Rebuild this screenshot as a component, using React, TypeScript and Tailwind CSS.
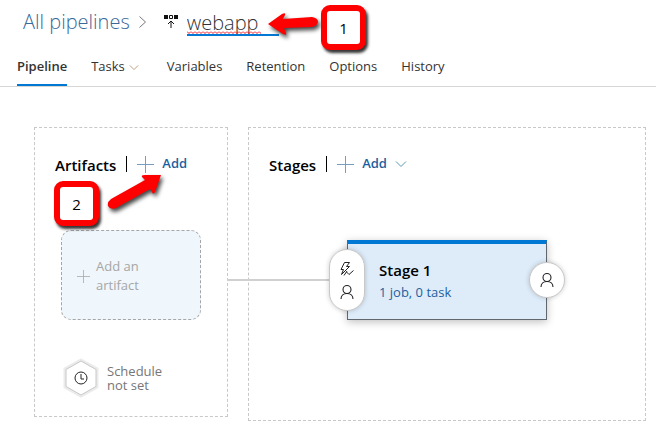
import React from "react";

const tabs = ["Pipeline", "Tasks", "Variables", "Retention", "Options", "History"];

function Chevron({ className }: { className: string }) {
  return (
    <svg className={className} viewBox="0 0 12 8" fill="none" stroke="currentColor" aria-hidden="true">
      <path d="M1 1.5l5 5 5-5" />
    </svg>
  );
}

function Plus({ className }: { className: string }) {
  return (
    <svg className={className} viewBox="0 0 17 17" fill="none" stroke="currentColor" aria-hidden="true">
      <path d="M8.5 0v17M0 8.5h17" />
    </svg>
  );
}

function Person() {
  return (
    <svg className="h-4 w-4" viewBox="0 0 16 16" fill="none" stroke="#222" strokeWidth="1.1" aria-hidden="true">
      <circle cx="8" cy="5.5" r="4" />
      <path d="M2 15c0-3.4 2.6-5.5 6-5.5s6 2.1 6 5.5" />
    </svg>
  );
}

function Trigger() {
  return (
    <svg className="h-4 w-4" viewBox="0 0 16 16" fill="none" stroke="#222" aria-hidden="true">
      <path d="M5.500 1.500h5L7.500 5.500h3L2.500 13.500l2-5H2z" />
      <path d="M5 14.500l3-4.500M7.500 11l2.500 2.500 4.500-4" />
    </svg>
  );
}

function Callout({ label, className }: { label: string; className: string }) {
  return (
    <div
      className={`absolute flex h-[45px] w-[45px] items-center justify-center rounded-[9px] border-6 border-[#fe0000] bg-white pt-[2px] text-[15px] text-black shadow-[2px_3px_3px_#333] ${className}`}
    >
      {label}
    </div>
  );
}

export default function App() {
  return (
    <div className="relative min-h-screen bg-white font-['Open_Sans','Noto_Sans',sans-serif] text-[13px] text-[#333]">
      <header className="border-b border-[#d6d6d6]">
        <div className="flex h-11 items-center pl-[23px] text-[20px] font-light">
          <a href="#" className="text-[#37699b]">All pipelines</a>
          <svg className="ml-2 h-3 w-[9px]" viewBox="0 0 9 12" fill="none" stroke="#777" aria-hidden="true">
            <path d="M1.500 0.500L7.500 6l-6 5.500" />
          </svg>
          <svg className="mr-2 ml-4 h-4 w-4" viewBox="0 0 16 16" fill="none" stroke="#111" aria-hidden="true">
            <path d="M1 1h4v4H1zM11 1h4v4h-4z" fill="#111" stroke="none" />
            <path d="M6.500 1.500h3v3h-3zM8 14V7M5 10l3-3 3 3" />
          </svg>
          <div className="relative w-[92px]">
            <input aria-label="Pipeline name" defaultValue="webapp" spellCheck={false} className="block h-8 w-full bg-transparent outline-none" />
            <span className="absolute bottom-[2px] left-0 h-[2px] w-full bg-[#0078d4]" />
            <svg className="absolute bottom-1 left-0 h-[3px] w-[74px]" fill="none" stroke="#e81123" aria-hidden="true">
              <defs>
                <pattern id="squiggle" width="4" height="3" patternUnits="userSpaceOnUse">
                  <path d="M0 0.500L2 2.500L4 0.500" />
                </pattern>
              </defs>
              <rect width="74" height="3" fill="url(#squiggle)" stroke="none" />
            </svg>
          </div>
        </div>
        <nav className="flex h-[42px] gap-6 pl-[17px]">
          {tabs.map((tab) => (
            <a
              key={tab}
              href="#"
              className={`flex items-center border-b-2 pt-[6px] ${tab === "Pipeline" ? "border-[#0078d4] font-semibold" : "border-transparent"}`}
            >
              {tab}
              {tab === "Tasks" && <Chevron className="mr-1 ml-1 h-[7px] w-[10px] text-[#b98d68]" />}
            </a>
          ))}
        </nav>
      </header>

      <main className="flex items-start gap-5 pt-10 pr-[10px] pl-[34px]">
        <section className="h-[290px] w-[194px] shrink-0 border border-dashed border-[#c8c8c8] pt-6 pl-5">
          <div className="flex h-6 items-center">
            <h2 className="pt-[2px] text-[15px] font-semibold text-black">Artifacts</h2>
            <span className="ml-[10px] h-4 w-px bg-black" />
            <button className="ml-[10px] flex items-center gap-2 font-semibold text-[#1d5f9e]">
              <Plus className="h-[17px] w-[17px] text-[#7a9dbd]" />
              Add
            </button>
          </div>
          <button className="mt-[54px] ml-[6px] flex h-[90px] w-[140px] items-center gap-[6px] rounded-[10px] border border-dashed border-[#a6a6a6] bg-[#eff6fc] pt-[2px] pl-[15px] text-left leading-[19px] text-[#a6a6a6]">
            <Plus className="h-[13px] w-[13px] shrink-0" />
            <span className="w-16">Add an artifact</span>
          </button>
          <button className="mt-[38px] ml-2 flex items-center gap-2 text-left leading-[14px] text-[#767676]">
            <svg className="h-10 w-9" viewBox="0 0 36 40" fill="none" aria-hidden="true">
              <path d="M18 2L34 11v18L18 38 2 29V11z" stroke="#ebebeb" strokeWidth="3" />
              <path d="M18 3L33 11.500v17L18 37 3 28.500v-17z" stroke="#c8c8c8" fill="white" />
              <circle cx="18" cy="20" r="6" stroke="#222" />
              <path d="M18 16v5h3" stroke="#222" />
            </svg>
            <span className="w-16">Schedule not set</span>
          </button>
        </section>

        <section className="h-[294px] flex-1 border border-dashed border-[#c8c8c8] pt-6 pl-5">
          <div className="flex h-6 items-center">
            <h2 className="pt-[2px] text-[15px] font-semibold text-black">Stages</h2>
            <span className="ml-[10px] h-4 w-px bg-black" />
            <button className="ml-[10px] flex items-center gap-2 font-semibold text-[#1d5f9e]">
              <Plus className="h-[17px] w-[17px] text-[#7a9dbd]" />
              Add
              <Chevron className="h-2 w-3 text-[#5a9ab5]" />
            </button>
          </div>
          <div className="relative mt-16 ml-[78px] h-20 w-[200px] border border-t-4 border-[#60676e] border-t-[#0078d4] bg-[#deecf9] pt-[14px] pl-[31px] shadow-[0_2px_8px_rgba(0,0,0,0.25)]">
            <span className="absolute top-[35px] right-full mr-[17px] h-[2px] w-[104px] bg-[#d0d0d0]" />
            <h3 className="text-[15px] leading-6 font-semibold text-black">Stage 1</h3>
            <a href="#" className="block leading-5 text-[#1d5f9e]">1 job, 0 task</a>
            <button
              aria-label="Pre-deployment conditions"
              className="absolute top-[5px] -left-[19px] flex h-[62px] w-9 flex-col items-center justify-center gap-[7px] rounded-full border border-[#c8c8c8] bg-white shadow-[0_0_5px_rgba(0,0,0,0.2)]"
            >
              <Trigger />
              <Person />
            </button>
            <button
              aria-label="Post-deployment conditions"
              className="absolute top-[18px] -right-[19px] flex h-9 w-9 items-center justify-center rounded-full border border-[#c8c8c8] bg-white shadow-[0_0_5px_rgba(0,0,0,0.2)]"
            >
              <Person />
            </button>
          </div>
        </section>
      </main>

      <Callout label="1" className="top-[5px] left-[321px]" />
      <Callout label="2" className="top-[181px] left-[54px]" />
      <svg className="pointer-events-none absolute top-0 left-0 h-[220px] w-[330px] drop-shadow-[2px_3px_2px_#444]" aria-hidden="true">
        <path d="M268 24L282 14Q286 12 285 15L283 19L312 17Q318 18 318 22Q317 26 312 27L284 28L286 33Q287 36 283 34Z" fill="#fe0000" />
        <path d="M161 175L155 192Q153 195 152 192L150 189L116 208Q110 210 108 206Q107 202 111 199L145 180L142 177Q141 175 145 175Z" fill="#fe0000" />
      </svg>
    </div>
  );
}
